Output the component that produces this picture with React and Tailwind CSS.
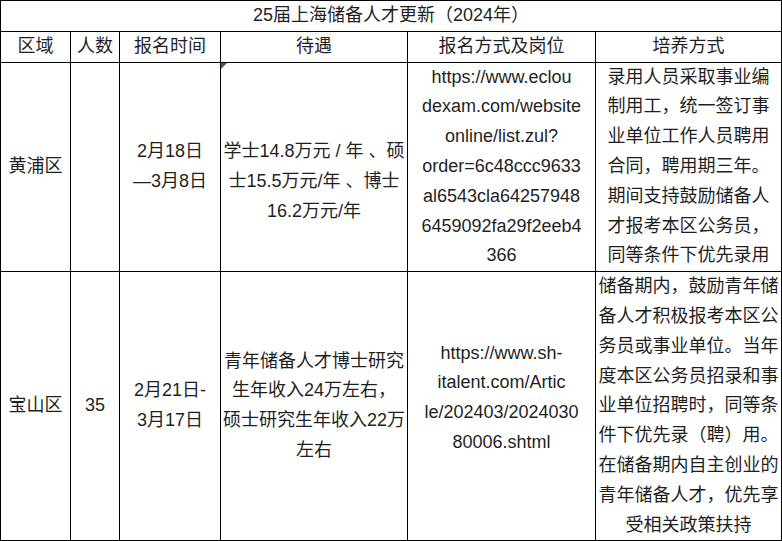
const font = { fontFamily: '"Liberation Sans", "Noto Sans CJK SC", sans-serif' };

const cell = "border border-black p-0 text-center align-middle whitespace-nowrap";

function Lines({ lines }) {
  return (
    <>
      {lines.map((l, i) => (
        <div key={i}>{l === "" ? "\u00a0" : l}</div>
      ))}
    </>
  );
}

export default function App() {
  return (
    <div className="w-[782px] h-[541px] overflow-hidden bg-white" style={font}>
      <table className="table-fixed border-collapse w-[781px] text-[18px] leading-[29.8px] text-[#1f1f1f]">
        <colgroup>
          <col className="w-[70px]" />
          <col className="w-[49px]" />
          <col className="w-[101px]" />
          <col className="w-[187px]" />
          <col className="w-[188px]" />
          <col className="w-[186px]" />
        </colgroup>
        <tbody>
          <tr className="h-[30px]">
            <td colSpan={6} className={cell}>
              25届上海储备人才更新（2024年）
            </td>
          </tr>
          <tr className="h-[30px]">
            <td className={cell}>区域</td>
            <td className={cell}>人数</td>
            <td className={cell}>报名时间</td>
            <td className={cell}>待遇</td>
            <td className={cell}>报名方式及岗位</td>
            <td className={cell}>培养方式</td>
          </tr>
          <tr>
            <td className={cell}>黄浦区</td>
            <td className={cell}></td>
            <td className={cell}>
              <Lines lines={["2月18日", "—3月8日"]} />
            </td>
            <td className={`${cell} relative`}>
              <div className="absolute left-0 top-0 h-0 w-0 border-t-[6px] border-r-[6px] border-t-[#2e6e2e] border-r-transparent" />
              <Lines lines={["", "学士14.8万元 / 年 、硕", "士15.5万元/年 、博士", "16.2万元/年"]} />
            </td>
            <td className={cell}>
              <Lines
                lines={[
                  "https://www.eclou",
                  "dexam.com/website",
                  "online/list.zul?",
                  "order=6c48ccc9633",
                  "al6543cla64257948",
                  "6459092fa29f2eeb4",
                  "366",
                ]}
              />
            </td>
            <td className={cell}>
              <Lines
                lines={[
                  "录用人员采取事业编",
                  "制用工，统一签订事",
                  "业单位工作人员聘用",
                  "合同，聘用期三年。",
                  "期间支持鼓励储备人",
                  "才报考本区公务员，",
                  "同等条件下优先录用",
                ]}
              />
            </td>
          </tr>
          <tr>
            <td className={`${cell} border-b-2`}>宝山区</td>
            <td className={`${cell} border-b-2`}>35</td>
            <td className={`${cell} border-b-2`}>
              <Lines lines={["2月21日-", "3月17日"]} />
            </td>
            <td className={`${cell} border-b-2`}>
              <Lines lines={["青年储备人才博士研究", "生年收入24万左右，", "硕士研究生年收入22万", "左右"]} />
            </td>
            <td className={`${cell} border-b-2 pb-[16px]`}>
              <Lines lines={["https://www.sh-", "italent.com/Artic", "le/202403/2024030", "80006.shtml"]} />
            </td>
            <td className={`${cell} border-b-2`}>
              <Lines
                lines={[
                  "储备期内，鼓励青年储",
                  "备人才积极报考本区公",
                  "务员或事业单位。当年",
                  "度本区公务员招录和事",
                  "业单位招聘时，同等条",
                  "件下优先录（聘）用。",
                  "在储备期内自主创业的",
                  "青年储备人才，优先享",
                  "受相关政策扶持",
                ]}
              />
            </td>
          </tr>
        </tbody>
      </table>
    </div>
  );
}
